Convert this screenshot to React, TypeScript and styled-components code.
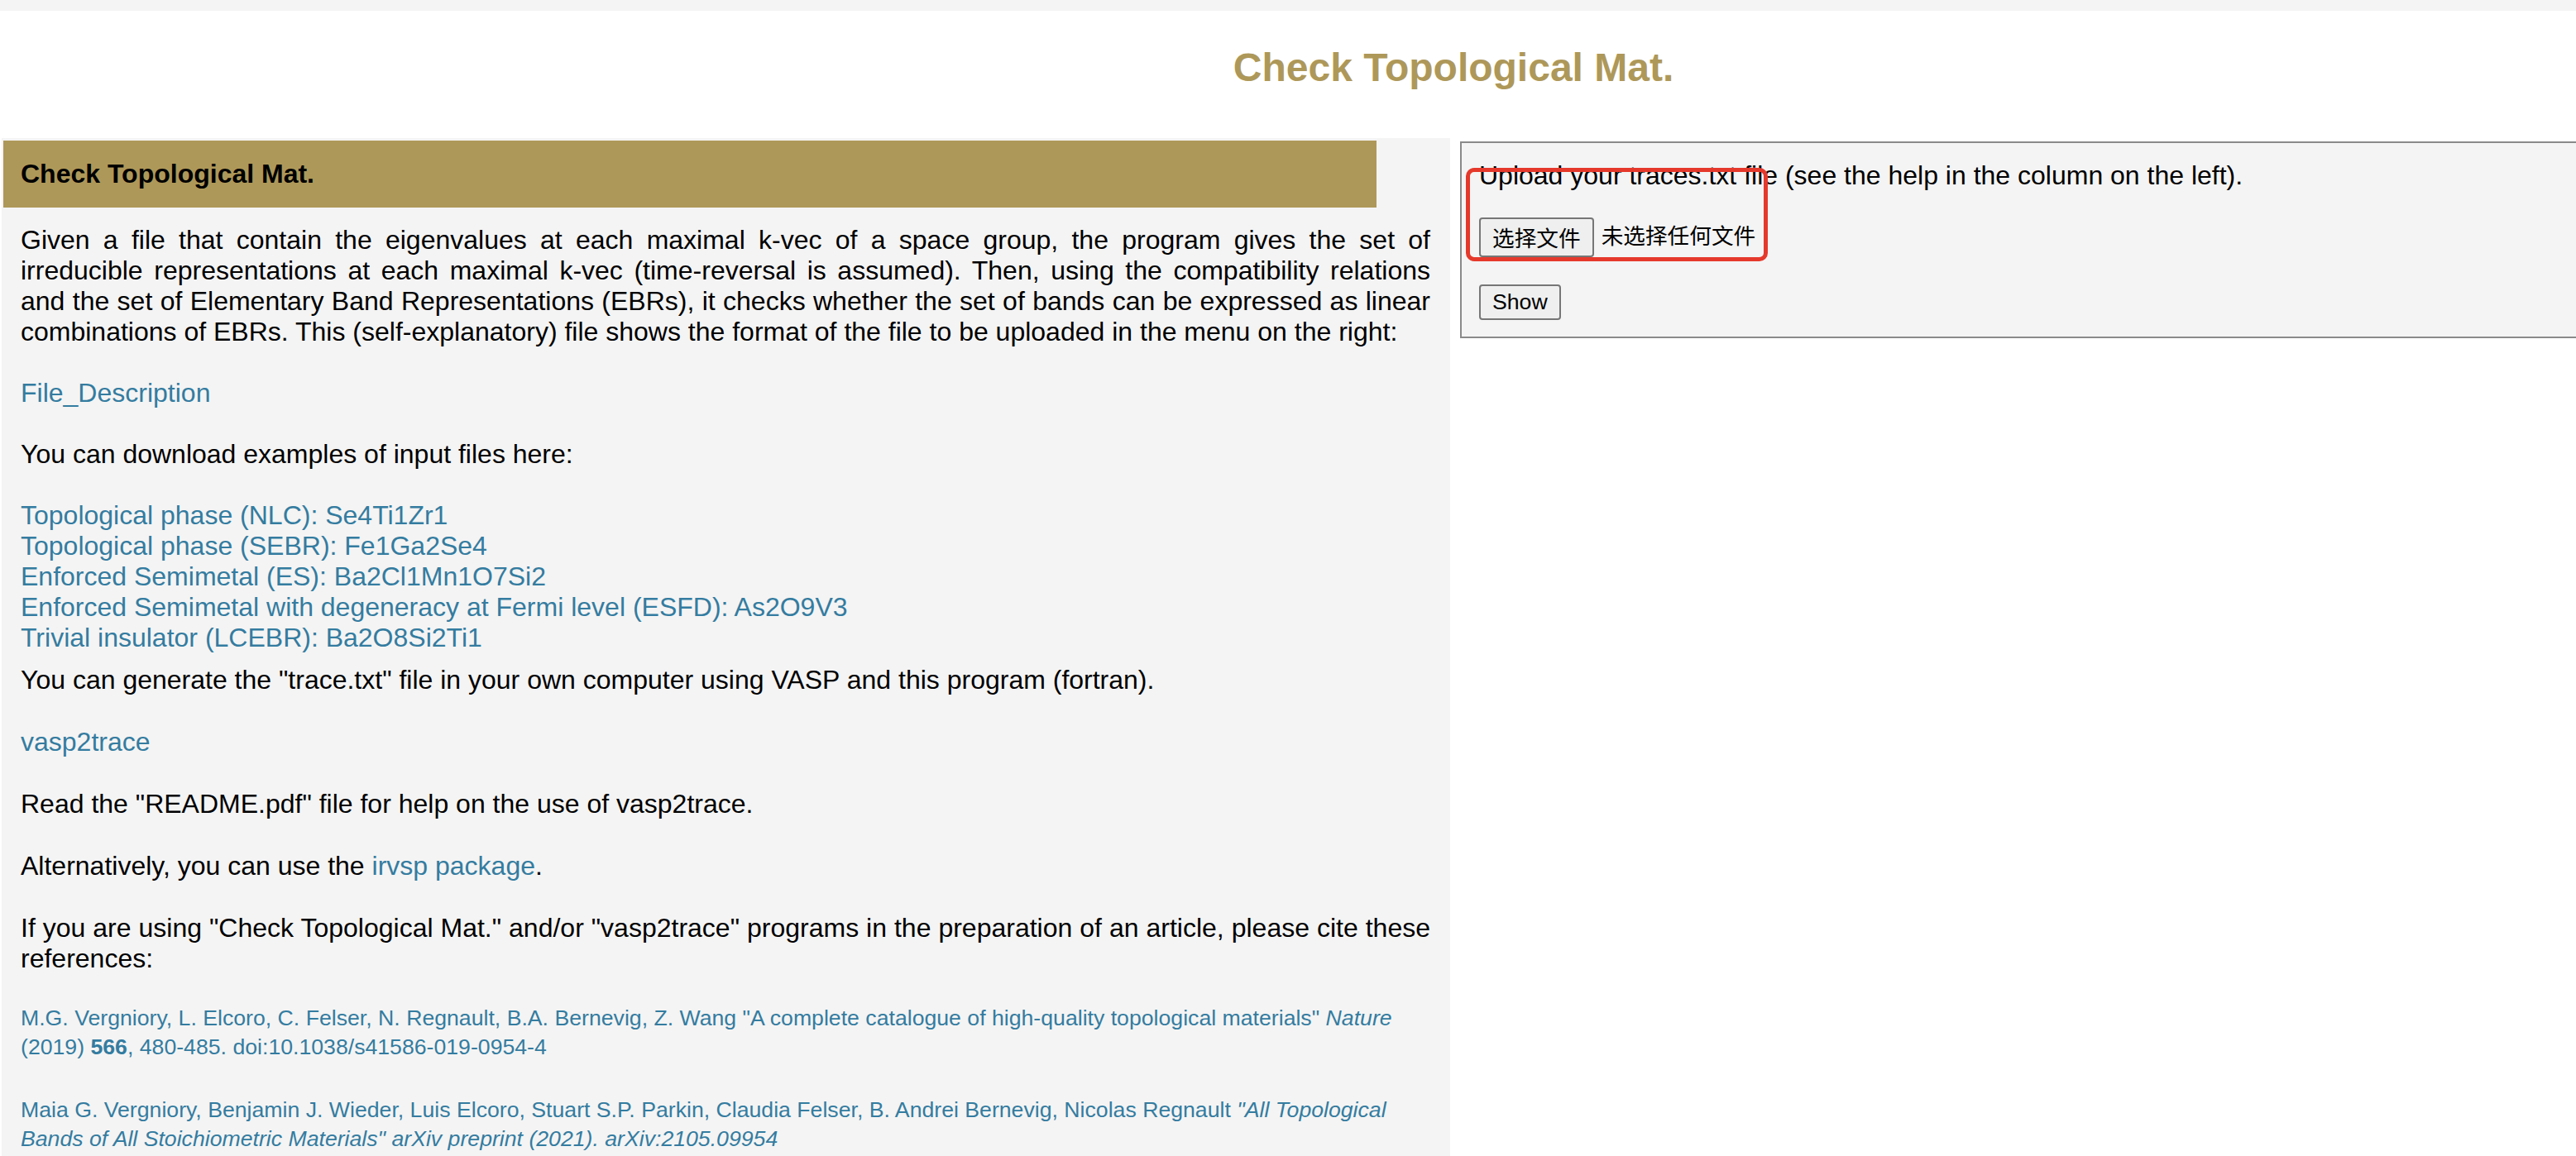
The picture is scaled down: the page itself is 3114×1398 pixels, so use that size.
import React from "react";
import styled, { createGlobalStyle } from "styled-components";

const GlobalStyle = createGlobalStyle`
  html, body {
    margin: 0;
    padding: 0;
    background: #ffffff;
    overflow: hidden;
  }
  body {
    font-family: "Liberation Sans", Arial, "Noto Sans CJK SC", sans-serif;
    color: #000000;
  }
`;

const GOLD = "#ae9859";
const LINK = "#347ca0";
const PANEL_BG = "#f4f4f4";

const TopStrip = styled.div`
  height: 13px;
  background: ${PANEL_BG};
`;

const Header = styled.header`
  height: 154px;
  box-sizing: border-box;
  padding: 41px 0 0 400px;
  display: flex;
  justify-content: center;
  background: #ffffff;
`;

const SiteTitle = styled.h1`
  margin: 0;
  font-size: 48px;
  line-height: 55px;
  font-weight: 700;
  color: ${GOLD};
`;

const Main = styled.div`
  display: flex;
  align-items: flex-start;
  gap: 12px;
  padding-left: 2px;
`;

const LeftColumn = styled.section`
  flex: none;
  width: 1751px;
  min-height: 1260px;
  box-sizing: border-box;
  padding-top: 3px;
  background: ${PANEL_BG};
`;

const SectionBar = styled.h2`
  box-sizing: border-box;
  width: 1660px;
  height: 81px;
  margin: 0 0 0 2px;
  padding-left: 21px;
  display: flex;
  align-items: center;
  background: ${GOLD};
  font-size: 32px;
  line-height: 37px;
  font-weight: 700;
  color: #000000;
`;

const Content = styled.div`
  padding: 21px 24px 40px 23px;
  display: flex;
  flex-direction: column;
`;

const Para = styled.p<{ $gap?: number; $justify?: boolean }>`
  margin: ${(p) => p.$gap ?? 0}px 0 0 0;
  font-size: 32px;
  line-height: 37px;
  text-align: ${(p) => (p.$justify ? "justify" : "left")};
`;

const Link = styled.a<{ $block?: boolean }>`
  color: ${LINK};
  text-decoration: none;
  display: ${(p) => (p.$block ? "block" : "inline")};
`;

const Citation = styled.p<{ $gap: number }>`
  margin: ${(p) => p.$gap}px 0 0 0;
  font-size: 26.67px;
  line-height: 35.3px;
  color: ${LINK};
`;

const UploadPanel = styled.section`
  position: relative;
  flex: 1;
  margin-top: 3.5px;
  margin-right: -40px;
  background: ${PANEL_BG};
  border: 2px solid #8a8a8a;
  padding: 21px 21px 20.6px 21px;
  display: flex;
  flex-direction: column;
  align-items: flex-start;
`;

const UploadText = styled.div`
  font-size: 32px;
  line-height: 37px;
`;

const FileRow = styled.div`
  margin-top: 32.8px;
  display: flex;
  align-items: center;
  gap: 9px;
`;

const NativeButton = styled.button<{ $h: number }>`
  box-sizing: border-box;
  height: ${(p) => p.$h}px;
  padding: 0 14px;
  margin: 0;
  background: #efefef;
  border: 2px solid #767676;
  border-radius: 4px;
  font-family: "Liberation Sans", Arial, "Noto Sans CJK SC", sans-serif;
  font-size: 26.67px;
  color: #000000;
  display: flex;
  align-items: center;
`;

const FileStatus = styled.span`
  font-family: "Liberation Sans", Arial, "Noto Sans CJK SC", sans-serif;
  font-size: 26.67px;
  line-height: 47px;
`;

const ShowRow = styled.div`
  margin-top: 33.6px;
`;

const Annotation = styled.div`
  position: absolute;
  left: 5.4px;
  top: 30.6px;
  width: 365px;
  height: 113.4px;
  box-sizing: border-box;
  border: 5px solid #e5392c;
  border-radius: 10px;
  pointer-events: none;
`;

const examples = [
  "Topological phase (NLC): Se4Ti1Zr1",
  "Topological phase (SEBR): Fe1Ga2Se4",
  "Enforced Semimetal (ES): Ba2Cl1Mn1O7Si2",
  "Enforced Semimetal with degeneracy at Fermi level (ESFD): As2O9V3",
  "Trivial insulator (LCEBR): Ba2O8Si2Ti1",
];

export default function App() {
  return (
    <>
      <GlobalStyle />
      <TopStrip />
      <Header>
        <SiteTitle>Check Topological Mat.</SiteTitle>
      </Header>
      <Main>
        <LeftColumn>
          <SectionBar>Check Topological Mat.</SectionBar>
          <Content>
            <Para $justify>
              Given a file that contain the eigenvalues at each maximal k-vec of a space group, the
              program gives the set of irreducible representations at each maximal k-vec
              (time-reversal is assumed). Then, using the compatibility relations and the set of
              Elementary Band Representations (EBRs), it checks whether the set of bands can be
              expressed as linear combinations of EBRs. This (self-explanatory) file shows the format
              of the file to be uploaded in the menu on the right:
            </Para>
            <Para $gap={37}>
              <Link href="#">File_Description</Link>
            </Para>
            <Para $gap={37}>You can download examples of input files here:</Para>
            <Para $gap={37}>
              {examples.map((e) => (
                <Link key={e} href="#" $block>
                  {e}
                </Link>
              ))}
            </Para>
            <Para $gap={14}>
              You can generate the "trace.txt" file in your own computer using VASP and this program
              (fortran).
            </Para>
            <Para $gap={38}>
              <Link href="#">vasp2trace</Link>
            </Para>
            <Para $gap={38}>Read the "README.pdf" file for help on the use of vasp2trace.</Para>
            <Para $gap={38}>
              Alternatively, you can use the <Link href="#">irvsp package</Link>.
            </Para>
            <Para $gap={38} $justify>
              If you are using "Check Topological Mat." and/or "vasp2trace" programs in the
              preparation of an article, please cite these references:
            </Para>
            <Citation $gap={36}>
              M.G. Vergniory, L. Elcoro, C. Felser, N. Regnault, B.A. Bernevig, Z. Wang "A complete
              catalogue of high-quality topological materials" <i>Nature</i> (2019) <b>566</b>,
              480-485. doi:10.1038/s41586-019-0954-4
            </Citation>
            <Citation $gap={40}>
              Maia G. Vergniory, Benjamin J. Wieder, Luis Elcoro, Stuart S.P. Parkin, Claudia Felser,
              B. Andrei Bernevig, Nicolas Regnault{" "}
              <i>
                "All Topological Bands of All Stoichiometric Materials" arXiv preprint (2021).
                arXiv:2105.09954
              </i>
            </Citation>
          </Content>
        </LeftColumn>
        <UploadPanel>
          <UploadText>Upload your traces.txt file (see the help in the column on the left).</UploadText>
          <FileRow>
            <NativeButton type="button" $h={47.4}>
              选择文件
            </NativeButton>
            <FileStatus>未选择任何文件</FileStatus>
          </FileRow>
          <ShowRow>
            <NativeButton type="button" $h={42.4}>
              Show
            </NativeButton>
          </ShowRow>
          <Annotation />
        </UploadPanel>
      </Main>
    </>
  );
}
